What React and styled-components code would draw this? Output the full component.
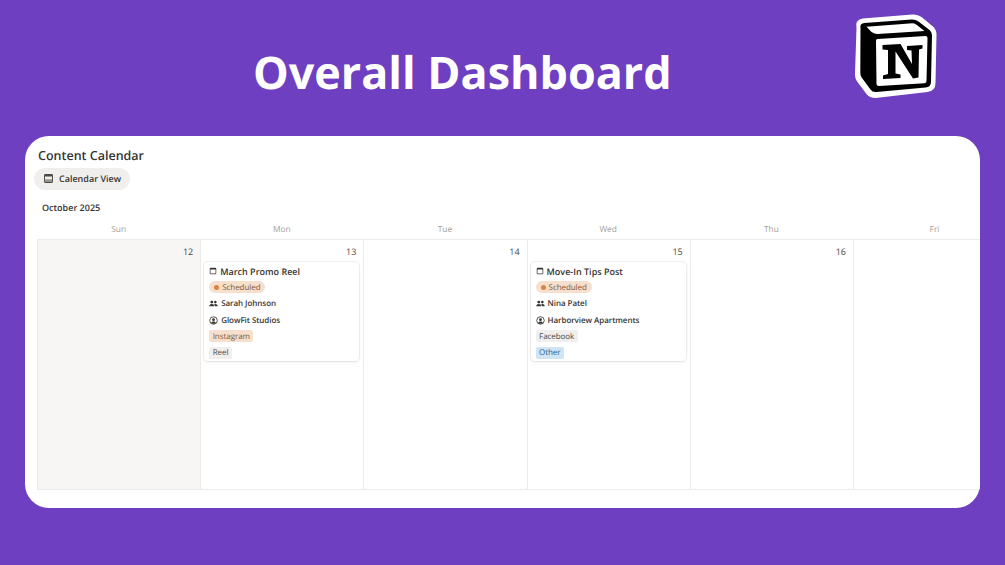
import React from "react";
import styled, { createGlobalStyle } from "styled-components";

const Global = createGlobalStyle`
  html, body { margin: 0; padding: 0; background: #6d3fc0; }
  body { width: 1005px; height: 565px; overflow: hidden; font-family: "Open Sans", "Noto Sans", sans-serif; text-rendering: geometricPrecision; }
`;
const Page = styled.div`
  width: 1005px; height: 565px; background: #6e3fc1; display: flex; flex-direction: column; padding: 0 25px 57px; box-sizing: border-box;
`;
const Banner = styled.header`
  height: 136px; flex: none; display: flex; align-items: flex-start;
`;
const Heading = styled.h1`
  margin: 44px 0 0 228px; font: 700 44.9px/58px "Open Sans", sans-serif; color: #fff; white-space: nowrap; width: 600px; flex: none;
`;
const Logo = styled.svg`
  width: 85px; height: 86px; margin-top: 13px; flex: none;
`;
const Panel = styled.main`
  flex: 1; background: #fff; border-radius: 24px; overflow: hidden; padding: 11px 0 18px 12px; display: flex; flex-direction: column; min-height: 0;
`;
const Title = styled.h2`
  margin: 0 0 0 1px; font-size: 12.5px; line-height: 17px; font-weight: 600; color: #37352f;
`;
const ViewTab = styled.div`
  align-self: flex-start; margin: 3.5px 0 0 -3px; height: 22px; padding: 0 9px 0 9px; background: #f0efed; border-radius: 11px; display: flex; align-items: center; gap: 5px; font-size: 9px; font-weight: 600; color: #37352f;
`;
const Month = styled.div`
  margin: 11.5px 0 0 5px; font-size: 9px; line-height: 14px; font-weight: 600; color: #37352f;
`;
const Weekdays = styled.div`
  display: grid; grid-template-columns: repeat(6, 163.2px); margin-top: 7px; height: 17px;
`;
const Weekday = styled.div`
  text-align: center; font-size: 8.4px; line-height: 16px; color: #a5a29c;
`;
const Grid = styled.div`
  flex: 1; display: grid; grid-template-columns: repeat(6, 163.2px); border-top: 1px solid #ebebe9; border-bottom: 1px solid #ebebe9; min-height: 0;
`;
const Day = styled.div`
  border-left: 1px solid #ebebe9; box-sizing: border-box; padding: 5px 4px 0 3px; background: ${p => (p.$muted ? "#f7f6f4" : "#fff")};
`;
const DayNum = styled.div`
  text-align: right; height: 14px; font-size: 9px; line-height: 14px; color: #4b4944; padding-right: 3px;
`;
const Card = styled.article`
  margin-top: 3px; border-radius: 4px; background: #fff; box-shadow: 0 0 0 1px rgba(55,53,47,.06), 0 1px 3px rgba(55,53,47,.1); padding: 1px 5px 0; display: flex; flex-direction: column; align-items: flex-start;
`;
const Row = styled.div`
  height: 16.3px; display: flex; align-items: center; gap: 3px; font-size: 8px; letter-spacing: -0.06px; font-weight: 600; color: #37352f; white-space: nowrap;
`;
const CardTitle = styled(Row)`
  font-size: 9px; letter-spacing: 0; font-weight: 600; gap: 3px;
`;
const Status = styled.span`
  height: 12px; border-radius: 6px; background: #f6dfcc; color: #7d5a3c; font-size: 8px; padding: 0 5px 0 5px; display: inline-flex; align-items: center; gap: 3px; font-weight: 400;
`;
const Dot = styled.i`
  width: 5px; height: 5px; border-radius: 50%; background: #d9853f; display: block;
`;
const Tag = styled.span`
  height: 12px; border-radius: 2px; background: ${p => p.$bg}; color: ${p => p.$fg}; font-size: 8px; letter-spacing: -0.06px; padding: 0 3.5px; display: inline-flex; align-items: center; font-weight: 400;
`;
const TagRow = styled.div`
  height: 16.3px; display: flex; align-items: center;
`;
const IconBox = styled.svg`
  width: ${p => p.$s || 9}px; height: ${p => p.$s || 9}px; flex: none; display: block;
`;

const CalIcon = ({ s, c = "#37352f" }) => (
  <IconBox $s={s} viewBox="0 0 16 16">
    <path fill={c} fillRule="evenodd" d="M3.5 1.500h9A2 2 0 0 1 14.500 3.500v9a2 2 0 0 1-2 2h-9a2 2 0 0 1-2-2v-9a2 2 0 0 1 2-2Zm-.6 3.700v7.300c0 .4.300.700.700.700h8.800c.4 0 .700-.300.700-.700V5.200Z" />
    {s > 10 && <path fill={c} opacity=".55" d="M3 9h10v4.500H3z" />}
  </IconBox>
);
const People = () => (
  <IconBox viewBox="0 0 16 16">
    <circle cx="5" cy="5.500" r="2.600" fill="#37352f" />
    <circle cx="11.300" cy="5.500" r="2.300" fill="#37352f" />
    <path fill="#37352f" d="M.5 13c0-2.500 2-4 4.500-4s4.500 1.500 4.500 4Zm10 0c0-1.500-.4-2.800-1.300-3.800.6-.2 1.300-.3 2-.3 2.400 0 4.300 1.500 4.300 4.100Z" />
  </IconBox>
);
const Client = () => (
  <IconBox viewBox="0 0 16 16">
    <circle cx="8" cy="8" r="6.700" fill="none" stroke="#37352f" strokeWidth="1.500" />
    <circle cx="8" cy="6.500" r="2.500" fill="#37352f" />
    <path fill="#37352f" d="M3.800 12c.8-1.500 2.400-2.300 4.200-2.300s3.400.8 4.200 2.300c-1 1.100-2.500 1.800-4.200 1.800S4.800 13.100 3.800 12Z" />
  </IconBox>
);

const Entry = ({ title, person, client, t1, t2 }) => (
  <Card>
    <CardTitle><CalIcon s={8} />{title}</CardTitle>
    <Row><Status><Dot />Scheduled</Status></Row>
    <Row><People />{person}</Row>
    <Row><Client />{client}</Row>
    <TagRow><Tag $bg={t1.bg} $fg={t1.fg}>{t1.label}</Tag></TagRow>
    <TagRow><Tag $bg={t2.bg} $fg={t2.fg}>{t2.label}</Tag></TagRow>
  </Card>
);

const NotionLogo = () => (
  <Logo viewBox="0 0 84 86">
    <path d="M3 15 Q1 7 9 5.500 L59 1.500 Q64 1 68 4 L80 14 Q83 17 83 22 L82 70 Q82 78 74 79 L22 85 Q16 85 13 81 L4 69 Q1 65 1.500 60 Z" fill="#fff" />
    <path d="M7 15 Q6 10.500 11 10 L58 6.500 Q62 6.300 65 8.500 L76 17 Q78.500 19 78.500 22 L77.500 69 Q77.500 74 72 74.500 L23 79 Q19 79.500 17 76.500 L8.500 65 Q6.800 63 6.800 60 Z" fill="#000" />
    <path d="M13 13.800 L59 10.300 Q61.500 10.300 64 12.500 L71 18 L24 21 Q21 21 18 19 Z" fill="#fff" />
    <path d="M24 26 L72 23 Q74 23 74 25 L73 68 Q73 70 71 70.300 L25.500 73 Q23 73 23 71 L22.500 28 Q22.500 26.200 24 26 Z" fill="#fff" />
    <path d="M29 32 L47 31 L58.500 51 L58 37.500 L53.500 37 L53.500 33 L69 32 L69 35.500 L65.500 36.500 L65 64.500 L59.500 65.500 L42 38.500 L42 60.500 L47 61.500 L47 65 L29.500 66 L29.500 62.500 L34.500 61 L34.500 37 L29 36.500 Z" fill="#000" />
  </Logo>
);

const days = [
  { id: "sun", n: 12, muted: true },
  { id: "mon", n: 13, e: { title: "March Promo Reel", person: "Sarah Johnson", client: "GlowFit Studios", t1: { label: "Instagram", bg: "#f6dfcc", fg: "#7d5a3c" }, t2: { label: "Reel", bg: "#f0efed", fg: "#4b4944" } } },
  { id: "tue", n: 14 },
  { id: "wed", n: 15, e: { title: "Move-In Tips Post", person: "Nina Patel", client: "Harborview Apartments", t1: { label: "Facebook", bg: "#f0efed", fg: "#4b4944" }, t2: { label: "Other", bg: "#cfe4f5", fg: "#2f5f85" } } },
  { id: "thu", n: 16 },
  { id: "fri" },
];

export default function App() {
  return (
    <Page>
      <Global />
      <Banner>
        <Heading>Overall Dashboard</Heading>
        <NotionLogo />
      </Banner>
      <Panel>
        <Title>Content Calendar</Title>
        <ViewTab><CalIcon s={11} c="#4b4944" />Calendar View</ViewTab>
        <Month>October 2025</Month>
        <Weekdays>
          {["Sun", "Mon", "Tue", "Wed", "Thu", "Fri"].map(d => <Weekday key={d}>{d}</Weekday>)}
        </Weekdays>
        <Grid>
          {days.map(d => (
            <Day key={d.id} $muted={d.muted}>
              <DayNum>{d.n}</DayNum>
              {d.e && <Entry {...d.e} />}
            </Day>
          ))}
        </Grid>
      </Panel>
    </Page>
  );
}
